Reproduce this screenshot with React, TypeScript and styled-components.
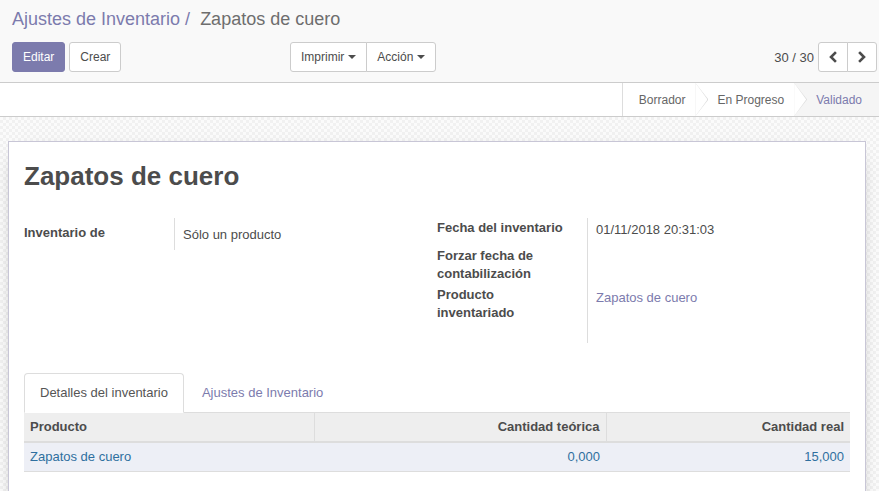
import React from "react";
import styled, { createGlobalStyle, css } from "styled-components";

const Global = createGlobalStyle`
  html, body { margin: 0; padding: 0; height: 100%; }
  body {
    font-family: "Liberation Sans", Arial, Helvetica, sans-serif;
    font-size: 13px;
    color: #4c4c4c;
    background: #fff;
    overflow: hidden;
  }
  #root { height: 100%; }
  * { box-sizing: border-box; }
`;

const Page = styled.div`
  display: flex;
  flex-direction: column;
  height: 100vh;
`;

const ControlPanel = styled.div`
  background: #f9f9f9;
  border-bottom: 1px solid #ccc;
  padding: 6px 2px 10px 12px;
`;

const Breadcrumb = styled.div`
  display: flex;
  align-items: baseline;
  font-size: 18px;
  line-height: 26px;
  height: 36px;
`;

const CrumbLink = styled.a`
  color: #7c7bad;
  text-decoration: none;
`;

const CrumbSep = styled.span`
  color: #7c7bad;
  padding: 0 5px;
`;

const CrumbCurrent = styled.span`
  color: #6e6e6e;
`;

const CpBar = styled.div`
  display: grid;
  grid-template-columns: 278px auto 1fr;
  align-items: center;
  height: 30px;
`;

const ButtonRow = styled.div`
  display: flex;
  gap: 4px;
`;

const Button = styled.button<{ $primary?: boolean }>`
  font-family: inherit;
  font-size: 12px;
  line-height: 16px;
  height: 30px;
  padding: 6px 10px;
  border-radius: 3px;
  border: 1px solid #ccc;
  background: #fff;
  color: #4c4c4c;
  cursor: pointer;
  display: inline-flex;
  align-items: center;
  ${(p) =>
    p.$primary &&
    css`
      background: #7c7bad;
      border-color: #7c7bad;
      color: #fff;
    `}
`;

const Group = styled.div`
  display: flex;
  ${Button} {
    border-radius: 0;
  }
  ${Button}:first-child {
    border-radius: 3px 0 0 3px;
  }
  ${Button}:last-child {
    border-radius: 0 3px 3px 0;
  }
  ${Button} + ${Button} {
    margin-left: -1px;
  }
`;

const Caret = styled.span`
  display: inline-block;
  width: 0;
  height: 0;
  margin-left: 4px;
  border-top: 4px solid currentColor;
  border-left: 4px solid transparent;
  border-right: 4px solid transparent;
`;

const Pager = styled.div`
  display: flex;
  align-items: center;
  justify-content: flex-end;
  gap: 4px;
`;

const PagerValue = styled.span`
  font-size: 13px;
  color: #4c4c4c;
`;

const PagerButton = styled(Button)`
  width: 30px;
  justify-content: center;
  padding: 0;
`;

const StatusBar = styled.div`
  display: flex;
  justify-content: flex-end;
  height: 34px;
  background: #fff;
  border-bottom: 1px solid #ccc;
`;

const StatusList = styled.div`
  display: flex;
  border-left: 1px solid #ddd;
`;

const StatusItem = styled.div<{ $active?: boolean; $first?: boolean }>`
  position: relative;
  display: flex;
  align-items: center;
  font-size: 12px;
  color: ${(p) => (p.$active ? "#7c7bad" : "#666")};
  background: ${(p) => (p.$active ? "#f5f5f5" : "#fff")};
  padding: 0 ${(p) => (p.$active ? "17px" : "10px")} 0
    ${(p) => (p.$first ? "16px" : "22px")};
  &:not(:last-child)::before,
  &:not(:last-child)::after {
    content: "";
    position: absolute;
    top: 0;
    left: 100%;
    height: 100%;
    clip-path: polygon(0 0, 100% 50%, 0 100%);
    z-index: 1;
  }
  &:not(:last-child)::before {
    width: 13px;
    background: #ddd;
  }
  &:not(:last-child)::after {
    width: 12px;
    background: #fff;
    z-index: 2;
  }
`;

const Content = styled.div`
  flex: 1;
  overflow: hidden;
  background: repeating-conic-gradient(#f1f1f1 0% 25%, #fbfbfb 0% 50%) 0 0 /
    6px 6px;
  padding: 24px 13px 0 8px;
`;

const Sheet = styled.div`
  background: #fff;
  border: 1px solid #c8c6d6;
  box-shadow: 0 5px 20px -15px #000;
  padding: 20px 15px 40px;
  min-height: 400px;
`;

const Title = styled.h1`
  margin: 0;
  font-size: 26px;
  line-height: 29px;
  font-weight: bold;
  color: #4c4c4c;
`;

const Groups = styled.div`
  display: grid;
  grid-template-columns: 1fr 1fr;
  align-items: start;
  margin-top: 27px;
`;

const FieldGroup = styled.div`
  display: grid;
  grid-template-columns: 150px 1fr;
  line-height: 18px;
`;

const Label = styled.div<{ $pt: number }>`
  font-weight: bold;
  padding-top: ${(p) => p.$pt}px;
  padding-right: 16px;
  color: #4c4c4c;
`;

const Value = styled.div<{ $pt: number; $h: number }>`
  border-left: 1px solid #ddd;
  padding-left: 8px;
  padding-top: ${(p) => p.$pt}px;
  min-height: ${(p) => p.$h}px;
  color: #4c4c4c;
`;

const ValueLink = styled.a`
  color: #7c7bad;
  text-decoration: none;
`;

const Tabs = styled.div`
  display: flex;
  margin-top: 30px;
  border-bottom: 1px solid #ddd;
`;

const Tab = styled.div<{ $active?: boolean }>`
  padding: 10px 15px;
  line-height: 18px;
  margin-right: 2px;
  margin-bottom: -1px;
  border: 1px solid transparent;
  border-radius: 4px 4px 0 0;
  color: #7c7bad;
  ${(p) =>
    p.$active &&
    css`
      color: #555;
      background: #fff;
      border-color: #ddd #ddd transparent;
    `}
`;

const Table = styled.table`
  width: 100%;
  border-collapse: collapse;
  table-layout: fixed;
  line-height: 18px;
`;

const Th = styled.th<{ $right?: boolean; $w: number }>`
  width: ${(p) => p.$w}px;
  background: #eee;
  font-weight: bold;
  color: #4c4c4c;
  text-align: ${(p) => (p.$right ? "right" : "left")};
  padding: 5px 6px;
  border-bottom: 2px solid #ddd;
  & + & {
    border-left: 1px solid #ddd;
  }
`;

const Tr = styled.tr`
  background: #edeff6;
  border-bottom: 1px solid #ddd;
`;

const Td = styled.td<{ $right?: boolean }>`
  padding: 5px 6px;
  color: #2f6f9f;
  text-align: ${(p) => (p.$right ? "right" : "left")};
`;

const Chevron = ({ dir }: { dir: "left" | "right" }) => (
  <svg width="10" height="12" viewBox="0 0 10 12" aria-hidden>
    <polyline
      points={dir === "left" ? "7,2 3,6 7,10" : "3,2 7,6 3,10"}
      fill="none"
      stroke="#4c4c4c"
      strokeWidth="2.6"
      strokeLinecap="square"
    />
  </svg>
);

export default function App() {
  return (
    <Page>
      <Global />
      <ControlPanel>
        <Breadcrumb>
          <CrumbLink href="#">Ajustes de Inventario</CrumbLink>
          <CrumbSep>/&nbsp;</CrumbSep>
          <CrumbCurrent>Zapatos de cuero</CrumbCurrent>
        </Breadcrumb>
        <CpBar>
          <ButtonRow>
            <Button $primary>Editar</Button>
            <Button>Crear</Button>
          </ButtonRow>
          <Group>
            <Button>
              Imprimir
              <Caret />
            </Button>
            <Button>
              Acción
              <Caret />
            </Button>
          </Group>
          <Pager>
            <PagerValue>30 / 30</PagerValue>
            <Group>
              <PagerButton aria-label="Anterior">
                <Chevron dir="left" />
              </PagerButton>
              <PagerButton aria-label="Siguiente">
                <Chevron dir="right" />
              </PagerButton>
            </Group>
          </Pager>
        </CpBar>
      </ControlPanel>
      <StatusBar>
        <StatusList>
          <StatusItem $first>Borrador</StatusItem>
          <StatusItem>En Progreso</StatusItem>
          <StatusItem $active>Validado</StatusItem>
        </StatusList>
      </StatusBar>
      <Content>
        <Sheet>
          <Title>Zapatos de cuero</Title>
          <Groups>
            <FieldGroup>
              <Label $pt={6}>Inventario de</Label>
              <Value $pt={8} $h={32}>
                Sólo un producto
              </Value>
            </FieldGroup>
            <FieldGroup>
              <Label $pt={1}>Fecha del inventario</Label>
              <Value $pt={3} $h={29}>
                01/11/2018 20:31:03
              </Value>
              <Label $pt={0}>Forzar fecha de contabilización</Label>
              <Value $pt={0} $h={39} />
              <Label $pt={0}>Producto inventariado</Label>
              <Value $pt={3} $h={57}>
                <ValueLink href="#">Zapatos de cuero</ValueLink>
              </Value>
            </FieldGroup>
          </Groups>
          <Tabs>
            <Tab $active>Detalles del inventario</Tab>
            <Tab>Ajustes de Inventario</Tab>
          </Tabs>
          <Table>
            <thead>
              <tr>
                <Th $w={290}>Producto</Th>
                <Th $w={292} $right>
                  Cantidad teórica
                </Th>
                <Th $w={244} $right>
                  Cantidad real
                </Th>
              </tr>
            </thead>
            <tbody>
              <Tr>
                <Td>Zapatos de cuero</Td>
                <Td $right>0,000</Td>
                <Td $right>15,000</Td>
              </Tr>
            </tbody>
          </Table>
        </Sheet>
      </Content>
    </Page>
  );
}
